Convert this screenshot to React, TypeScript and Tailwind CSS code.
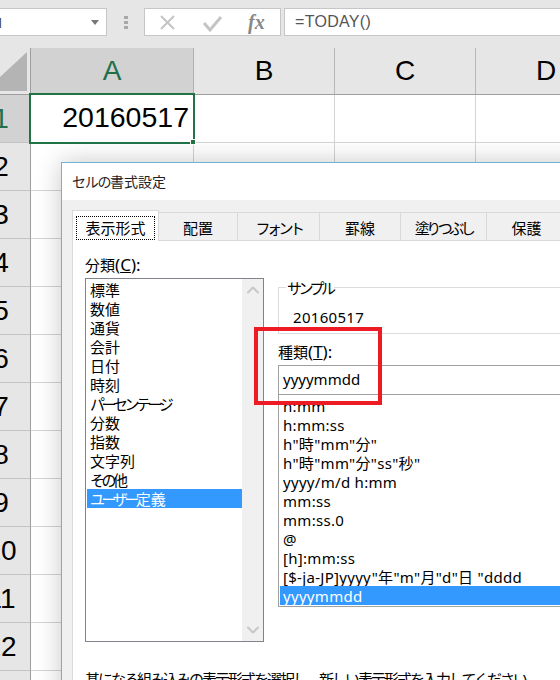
import React from 'react';
import { ChevronUp, ChevronDown } from 'lucide-react';

const uiFont = { fontFamily: '"Noto Sans", "Noto Sans CJK JP", sans-serif' };
const sheetFont = { fontFamily: '"Liberation Sans", sans-serif' };

const columns = [
  { label: 'A', width: 'w-[163px]', active: true },
  { label: 'B', width: 'w-[141px]' },
  { label: 'C', width: 'w-[141px]' },
  { label: 'D', width: 'w-[141px]' },
];

const rows = ['1', '2', '3', '4', '5', '6', '7', '8', '9', '10', '11', '12', '13'];

// kana is set much narrower than kanji in the dialog font
const Kana = ({ children }: { children: React.ReactNode }) => (
  <span className="tracking-[-3.5px]">{children}</span>
);

const tabs = [
  { key: 'number', label: '表示形式', width: 'w-[87px]' },
  { key: 'align', label: '配置', width: 'w-[79px]' },
  { key: 'font', label: <Kana>フォント</Kana>, width: 'w-[82px]' },
  { key: 'border', label: '罫線', width: 'w-[81px]' },
  { key: 'fill', label: <Kana>塗りつぶし</Kana>, width: 'w-[86px]' },
  { key: 'protect', label: '保護', width: 'w-[80px]' },
];

const categories = [
  { key: 'general', label: '標準' },
  { key: 'number', label: '数値' },
  { key: 'currency', label: '通貨' },
  { key: 'account', label: '会計' },
  { key: 'date', label: '日付' },
  { key: 'time', label: '時刻' },
  { key: 'percent', label: <Kana>パーセンテージ</Kana> },
  { key: 'fraction', label: '分数' },
  { key: 'exp', label: '指数' },
  { key: 'text', label: '文字列' },
  { key: 'other', label: <><Kana>その</Kana>他</> },
  { key: 'custom', label: <><Kana>ユーザー</Kana>定義</> },
];

const formats = ['h:mm', 'h:mm:ss', 'h"時"mm"分"', 'h"時"mm"分"ss"秒"', 'yyyy/m/d h:mm', 'mm:ss', 'mm:ss.0', '@', '[h]:mm:ss', '[$-ja-JP]yyyy"年"m"月"d"日 "dddd', 'yyyymmdd'];

const FormulaBar = () => (
  <div className="h-12 bg-[#e6e6e6] flex items-start pt-2 shrink-0">
    <div className="w-[107px] h-[28px] bg-white border border-[#c6c6c6] border-l-0 flex items-center justify-between pr-[7px] overflow-hidden">
      <span className="ml-[-14px] text-[15px] text-[#444]" style={uiFont}>A1</span>
      <div className="w-0 h-0 border-x-[4px] border-x-transparent border-t-[5px] border-t-[#777]" />
    </div>
    <div className="w-[37px] h-[28px] flex flex-col items-center justify-center gap-[2px]">
      <div className="w-[4px] h-[3px] bg-[#a8a8a8]" />
      <div className="w-[4px] h-[3px] bg-[#a8a8a8]" />
      <div className="w-[4px] h-[3px] bg-[#a8a8a8]" />
    </div>
    <div className="w-[137px] h-[28px] bg-white border border-[#c6c6c6] flex items-center">
      <svg width="135" height="26" viewBox="0 0 135 26" fill="none" className="shrink-0">
        <path d="M16 7 L29 20 M29 7 L16 20" stroke="#c4c4c4" strokeWidth="2" />
        <path d="M59 14 L65 21 L76 8" stroke="#c4c4c4" strokeWidth="3" />
      </svg>
      <span className="ml-[-32px] italic font-bold text-[20px] text-[#888]" style={{ fontFamily: '"Liberation Serif", serif' }}>fx</span>
    </div>
    <div className="ml-[3px] flex-1 h-[28px] bg-white border border-[#c6c6c6] border-r-0 flex items-center pl-[10px] text-[#555] text-[16px] tracking-[0.3px]" style={sheetFont}>
      =TODAY()
    </div>
  </div>
);

const ColumnHeaders = () => (
  <div className="h-[47px] flex bg-[#e6e6e6] border-b border-[#9e9e9e] shrink-0">
    <div className="w-[31px] shrink-0 border-r border-[#9e9e9e] flex items-end justify-end pr-[3px] pb-[3px]">
      <svg width="27" height="39" viewBox="0 0 27 39">
        <path d="M27 0 V39 H0 V25 Z" fill="#b4b4b4" />
      </svg>
    </div>
    {columns.map((col) => (
      <div
        key={col.label}
        className={`${col.width} shrink-0 flex items-center justify-center text-[28px] border-r ${col.active ? 'bg-[#d2d2d2] text-[#21704a] border-[#b0b0b0]' : 'text-black border-[#b8b8b8]'}`}
        style={sheetFont}
      >
        {col.label}
      </div>
    ))}
  </div>
);

const Row = ({ label, index }: { label: string; index: number }) => (
  <div className="h-[48px] flex shrink-0">
    <div className={`w-[31px] shrink-0 overflow-hidden border-r border-b border-r-[#9e9e9e] border-b-[#c4c4c4] ${index === 0 ? 'bg-[#d2d2d2] text-[#21704a]' : 'bg-[#e6e6e6] text-black'}`}>
      <div className="ml-[-28px] w-[58px] h-full flex items-center justify-center text-[28px]" style={sheetFont}>
        {label}
      </div>
    </div>
    {columns.map((col) => (
      <div key={col.label} className={`${col.width} shrink-0 border-r border-b border-[#d4d4d4] bg-white`} />
    ))}
  </div>
);

const CategoryList = () => (
  <div className="w-[179px] h-[364px] border border-[#82828c] bg-white flex shrink-0">
    <div className="w-[156px] pt-[1px] pl-[1px] text-[15px] text-black">
      {categories.map((cat, i) => (
        <div key={cat.key} className={`h-[19px] leading-[21px] pl-[3px] whitespace-nowrap ${i === categories.length - 1 ? 'bg-[#3399ff] text-white' : ''}`}>
          {cat.label}
        </div>
      ))}
    </div>
    <div className="w-[21px] bg-[#f0f0f0] flex flex-col justify-between items-center py-[1px]">
      <ChevronUp size={20} strokeWidth={2.5} className="text-[#c8c8c8]" />
      <ChevronDown size={20} strokeWidth={2.5} className="text-[#c8c8c8]" />
    </div>
  </div>
);

const FormatPane = () => (
  <div className="flex-1 ml-[14px]">
    <div className="h-[47px] mt-[9px] border border-[#dcdcdc] border-r-0 relative pl-[14px] pt-[19px] text-[15px] leading-[20px] tracking-[0.3px]">
      <span className="absolute left-[7px] top-[-10px] bg-white px-[1px] tracking-normal"><Kana>サンプル</Kana></span>
      20160517
    </div>
    <div className="mt-[8px] h-[20px] text-[15px] leading-[20px]">
      種類<span className="text-[17px]">(<span className="underline">T</span>):</span>
    </div>
    <div className="mt-[3px] h-[29px] border border-[#a0a0a0] border-r-0 border-b-0 pl-[4px] text-[15px] leading-[26px] bg-white">yyyymmdd</div>
    <div className="h-[213px] border border-[#a0a0a0] border-r-0 bg-white overflow-hidden flex flex-col justify-end pl-[1px] pb-[1px] text-[15px] tracking-[0.3px]">
      {formats.map((f, i) => (
        <div key={f} className={`h-[19px] shrink-0 leading-[21px] pl-[3px] whitespace-nowrap ${i === formats.length - 1 ? 'bg-[#3399ff] text-white' : ''}`}>
          {f}
        </div>
      ))}
    </div>
  </div>
);

const FormatDialog = () => (
  <div className="absolute left-[61px] top-[162px] w-[540px] h-[560px] border border-[#6fb1d8] bg-white shadow-[0_0_24px_rgba(0,0,0,0.22)] text-black" style={uiFont}>
    <div className="h-[37px] pl-[10px] flex items-center text-[14px] text-[#222]">
      <span className="tracking-[-1.3px]">セルの</span>書式設定
    </div>
    <div className="h-full bg-[#f0f0f0] pl-[10px] pt-[10px]">
      <div className="flex items-end h-[31px] relative z-10">
        {tabs.map((tab, i) => (
          <div
            key={tab.key}
            className={`${tab.width} shrink-0 text-[15px] flex items-center justify-center border-t border-r border-[#d9d9d9] ${i === 0 ? 'h-[31px] bg-white border-l pt-[3px]' : 'h-[29px] pt-[2px]'}`}
          >
            {i === 0 ? (
              <span className="border border-dotted border-black leading-[22px] h-[24px] w-[79px] text-center">{tab.label}</span>
            ) : (
              tab.label
            )}
          </div>
        ))}
      </div>
      <div className="bg-white border border-[#d9d9d9] border-r-0 h-[600px] mt-[-1px] pl-[12px] pt-[14px]">
        <div className="h-[20px] text-[15px] leading-[20px]">
          分類<span className="text-[17px]">(<span className="underline">C</span>):</span>
        </div>
        <div className="flex mt-[3px]">
          <CategoryList />
          <FormatPane />
        </div>
        <div className="mt-[27px] text-[15px] leading-[20px] whitespace-nowrap tracking-[-2px]">基になる組み込みの表示形式を選択し、新しい表示形式を入力してください。</div>
      </div>
    </div>
  </div>
);

export default function App() {
  return (
    <div className="relative w-[560px] h-[680px] overflow-hidden bg-white">
      <FormulaBar />
      <ColumnHeaders />
      <div className="relative">
        {rows.map((label, i) => (
          <Row key={label} label={label} index={i} />
        ))}
        {/* selected cell */}
        <div className="absolute left-[29px] top-[-2px] w-[166px] h-[51px] border-[2px] border-[#217346] flex items-center justify-end pr-[4px] pb-[2px] text-[28.5px] text-black" style={sheetFont}>
          20160517
          <div className="absolute right-[-3px] bottom-[-3px] w-[6px] h-[6px] bg-[#217346] border border-white" />
        </div>
      </div>
      <FormatDialog />
      {/* red highlight drawn over the dialog */}
      <div className="absolute left-[254px] top-[327px] w-[128px] h-[78px] border-[4px] border-[#ed1c24]" />
    </div>
  );
}
